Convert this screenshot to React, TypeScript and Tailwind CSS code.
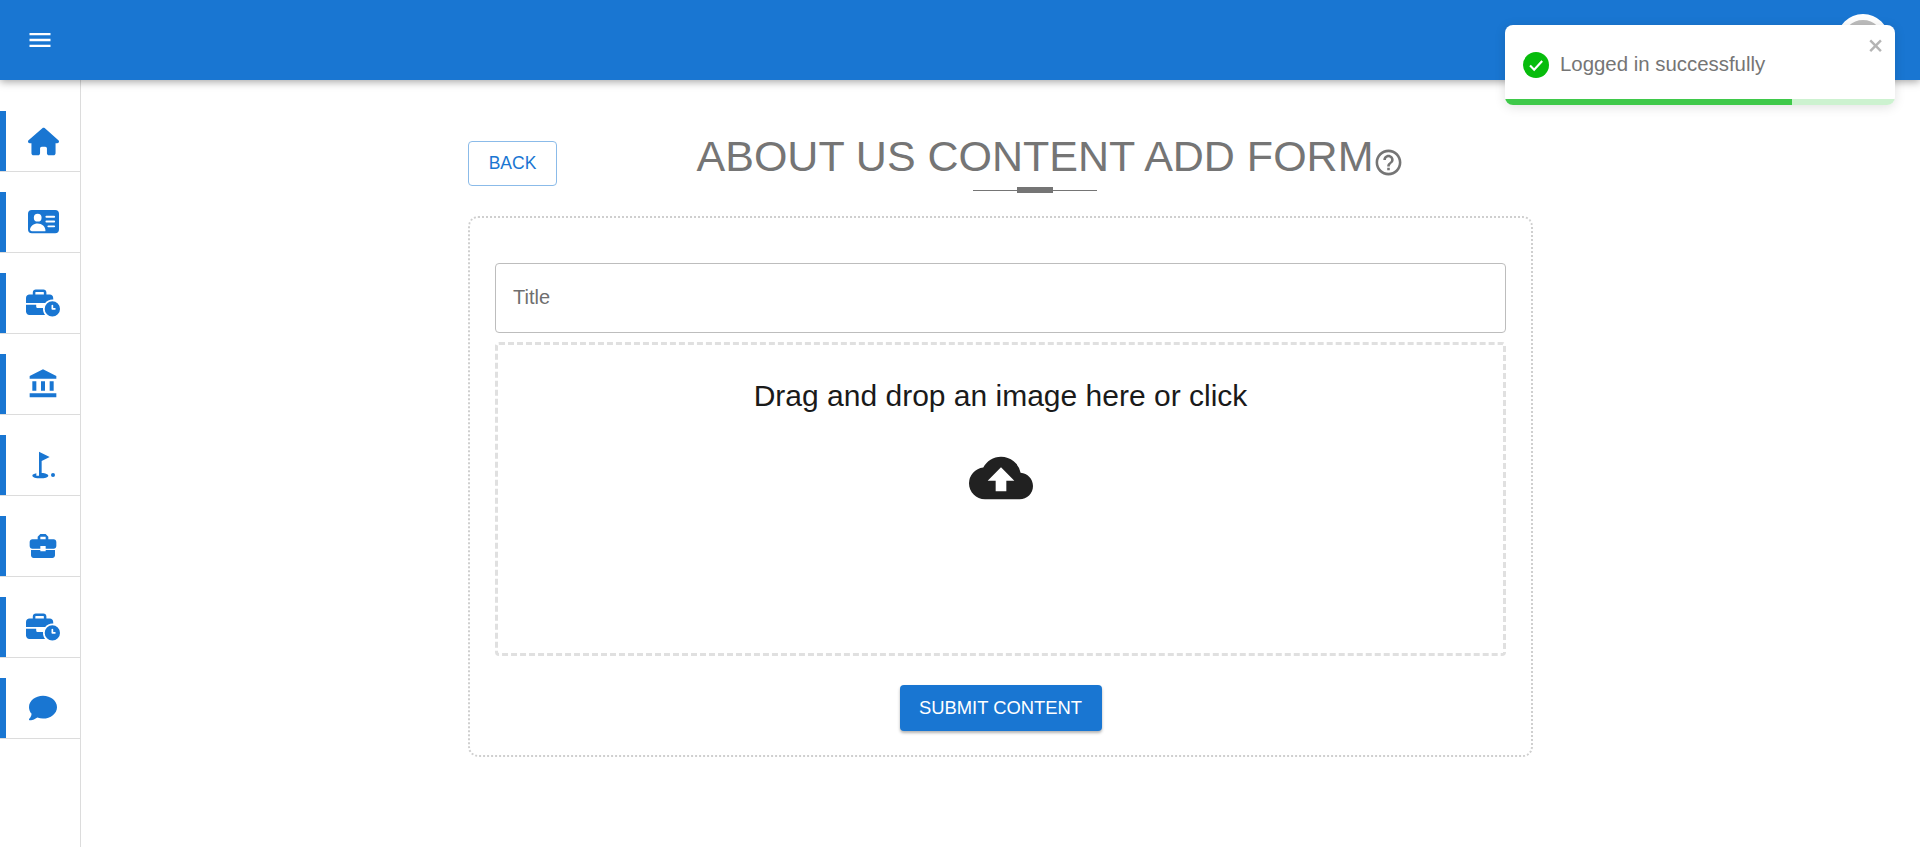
import { FaHouse, FaBusinessTime, FaComment } from "react-icons/fa6";
import { BsPersonVcardFill } from "react-icons/bs";
import { MdAccountBalance, MdGolfCourse, MdBusinessCenter, MdCloudUpload, MdHelpOutline, MdMenu } from "react-icons/md";

const items = [
  <FaHouse className="w-[31px] h-[31px]" />,
  <BsPersonVcardFill className="-mt-[1px] w-[31px] h-[31px]" />,
  <FaBusinessTime className="w-[34px] h-[28px]" />,
  <MdAccountBalance className="w-[32px] h-[32px]" />,
  <MdGolfCourse className="w-[32px] h-[32px]" />,
  <MdBusinessCenter className="w-[32px] h-[32px]" />,
  <FaBusinessTime className="w-[34px] h-[28px]" />,
  <FaComment className="w-[28px] h-[28px]" />,
];

export default function App() {
  return (
    <div className="relative h-[847px] overflow-hidden bg-white font-['Liberation_Sans',Arial,sans-serif]">
      <header className="relative z-10 flex h-20 items-center justify-between bg-[#1976d2] pl-[26px] pr-[31px] shadow-[0_2px_8px_rgba(0,0,0,0.35)]">
        <MdMenu className="h-[28px] w-[28px] text-white" />
        <div className="h-[52px] w-[52px] rounded-full border-[6px] border-white bg-[#bdbdbd]" />
      </header>

      <div className="flex h-[767px]">
        <aside className="w-[81px] shrink-0 border-r border-[#dcdcdc] pt-[31px]">
          {items.map((icon, i) => (
            <div key={i} className="mb-[20px] flex h-[61px] items-center border-b border-[#dcdcdc]">
              <div className="h-[60px] w-[6px] shrink-0 bg-[#1976d2]" />
              <div className="flex flex-1 items-center justify-center text-[#1976d2]">{icon}</div>
            </div>
          ))}
        </aside>

        <main className="flex flex-1 justify-center pt-[52px]">
          <div className="w-[1065px]">
            <div className="flex items-start">
              <button className="mt-[9px] flex h-[45px] w-[89px] shrink-0 items-center justify-center rounded-[4px] border border-[#8bbbe9] text-[17.5px] text-[#1976d2]">BACK</button>
              <div className="flex flex-1 flex-col items-center pr-[20px]">
                <div className="relative text-[43px] leading-[50px] text-[#757575]">
                  <h1 className="-mt-[1px] font-normal">ABOUT US CONTENT ADD FORM</h1>
                  <MdHelpOutline className="absolute left-full top-[15px] h-[31px] w-[31px]" />
                </div>
                <div className="relative mt-[6px] h-[6px] w-[124px]">
                  <div className="absolute left-0 right-0 top-[3px] h-px bg-[#757575]" />
                  <div className="absolute left-[44px] top-0 h-[6px] w-[36px] bg-[#757575]" />
                </div>
              </div>
            </div>

            <section className="mt-[23px] flex h-[541px] flex-col rounded-[10px] border-2 border-dotted border-[#cfcfcf] px-[25px] pt-[45px]">
              <div className="flex h-[70px] items-center rounded-[4px] border border-[#bdbdbd] px-[17px] pb-[2px] text-[20px] text-[#6f6f6f]">Title</div>
              <div className="mt-[9px] flex h-[314px] flex-col items-center rounded-[4px] border-[3px] border-dashed border-[#e0e0e0]">
                <p className="mt-[33px] text-[30px] leading-[36px] text-[#1a1a1a]">Drag and drop an image here or click</p>
                <MdCloudUpload className="mt-[32px] h-[64px] w-[64px] text-[#212121]" />
              </div>
              <button className="mx-auto mt-[29px] h-[46px] w-[202px] rounded-[4px] bg-[#1976d2] text-[18.4px] text-white shadow-[0_2px_3px_rgba(0,0,0,0.3)]">SUBMIT CONTENT</button>
            </section>
          </div>
        </main>
      </div>

      <div className="absolute left-[1505px] top-[25px] z-20 flex h-[80px] w-[390px] flex-col overflow-hidden rounded-[8px] bg-white shadow-[0_2px_12px_rgba(0,0,0,0.12)]">
        <div className="relative flex flex-1 items-center pl-[18px] pt-[5px]">
          <svg viewBox="0 0 24 24" className="h-[26px] w-[26px]">
            <circle cx="12" cy="12" r="12" fill="#07bc0c" />
            <path d="M6.5 12.5l3.8 3.8 7.4-8" fill="none" stroke="#fff" strokeWidth="2" />
          </svg>
          <span className="ml-[11px] text-[20.4px] text-[#757575]">Logged in successfully</span>
          <svg viewBox="0 0 14 16" className="absolute right-[10px] top-[11px] h-[19px] w-[17px] fill-[#b4b4b4]">
            <path fillRule="evenodd" d="M7.71 8.23l3.75 3.75-1.48 1.48-3.75-3.75-3.75 3.75L1 11.98l3.75-3.75L1 4.48 2.48 3l3.75 3.75L9.98 3l1.48 1.48-3.75 3.75z" />
          </svg>
        </div>
        <div className="flex h-[6px]">
          <div className="w-[287px] bg-[#3fc94a]" />
          <div className="flex-1 bg-[#cdf2d0]" />
        </div>
      </div>
    </div>
  );
}
